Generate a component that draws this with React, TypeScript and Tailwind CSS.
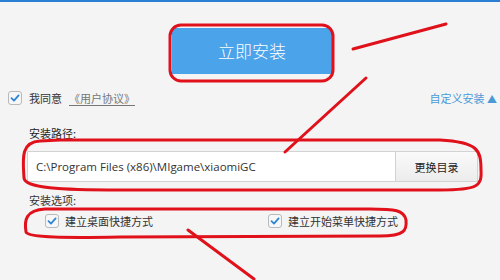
import React from 'react';

function Check() {
    return (
        <span className="w-[14px] h-[14px] rounded-[3px] border border-[#b9b9b9] bg-[#f7f7f7] flex items-center justify-center shrink-0">
            <svg width="10" height="10" viewBox="0 0 10 10">
                <path d="M1.5 5.2 L4 7.6 L8.6 2.4" fill="none" stroke="#2f86d6" strokeWidth="1.8" strokeLinecap="round" strokeLinejoin="round" />
            </svg>
        </span>
    );
}

export default function App() {
    return (
        <div
            className="relative w-[500px] h-[280px] overflow-hidden bg-[#f4f4f4] border-t-2 border-[#2a7fd4] text-[#333] leading-[14px]"
            style={{ fontFamily: '"Noto Sans CJK SC", "Liberation Sans", sans-serif' }}
        >
            <div className="pt-[26px] pl-[172px]">
                <button className="w-[160px] h-[46px] bg-[#4ba3ea] text-white text-[17px] font-light flex items-center justify-center">
                    立即安装
                </button>
            </div>

            <div className="mt-[17px] flex items-center justify-between pl-[8px] pr-[3px] h-[14px]">
                <div className="flex items-center">
                    <Check />
                    <span className="ml-[7px] text-[11px] text-[#333]">我同意</span>
                    <span className="ml-[7px] text-[11px] text-[#777] underline underline-offset-2">《用户协议》</span>
                </div>
                <div className="text-[11px] text-[#4a9ad8]">自定义安装 <span className="text-[10px]">▲</span></div>
            </div>

            <div className="mt-[21px] pl-[29px] text-[11px] text-[#222]">安装路径:</div>

            <div className="mt-[11px] ml-[27px] w-[451px] h-[31px] flex border border-[#d2d2d2] bg-white">
                <div className="flex-1 flex items-center pl-[8px] text-[11.5px] text-[#333]" style={{ fontFamily: '"Open Sans", "Noto Sans CJK SC", sans-serif' }}>
                    C:\Program Files (x86)\MIgame\xiaomiGC
                </div>
                <div className="w-[82px] flex items-center justify-center border-l border-[#d2d2d2] bg-gradient-to-b from-[#fafafa] to-[#ececec] text-[11px] text-[#222]">
                    更换目录
                </div>
            </div>

            <div className="mt-[11px] pl-[29px] text-[11px] text-[#333]">安装选项:</div>

            <div className="mt-[7px] flex items-center h-[14px]">
                <div className="ml-[45px] flex items-center w-[223px]">
                    <Check />
                    <span className="ml-[6px] text-[11px]">建立桌面快捷方式</span>
                </div>
                <div className="flex items-center">
                    <Check />
                    <span className="ml-[6px] text-[11px]">建立开始菜单快捷方式</span>
                </div>
            </div>

            <svg className="absolute left-0 top-[-2px] pointer-events-none" width="500" height="280" viewBox="0 0 500 280">
                <g fill="none" stroke="#e0111b" strokeWidth="3" strokeLinecap="round">
                    <rect x="170" y="25" width="163" height="56" rx="11" />
                    <line x1="353" y1="49" x2="446" y2="24" />
                    <line x1="366" y1="78" x2="285" y2="152" />
                    <path d="M40 141 C 20 142, 23 160, 24 178 C 25 188, 60 190, 120 190 L 440 190 C 478 190, 482 186, 481 170 C 481 150, 478 142, 440 140 L 60 140 Z" />
                    <path d="M45 209 C 26 210, 24 220, 26 232 C 28 238, 70 238, 120 237 L 380 236 C 405 236, 407 230, 406 220 C 404 210, 395 209, 370 209 L 60 209 Z" />
                    <line x1="188" y1="230" x2="254" y2="279" />
                </g>
            </svg>
        </div>
    );
}
